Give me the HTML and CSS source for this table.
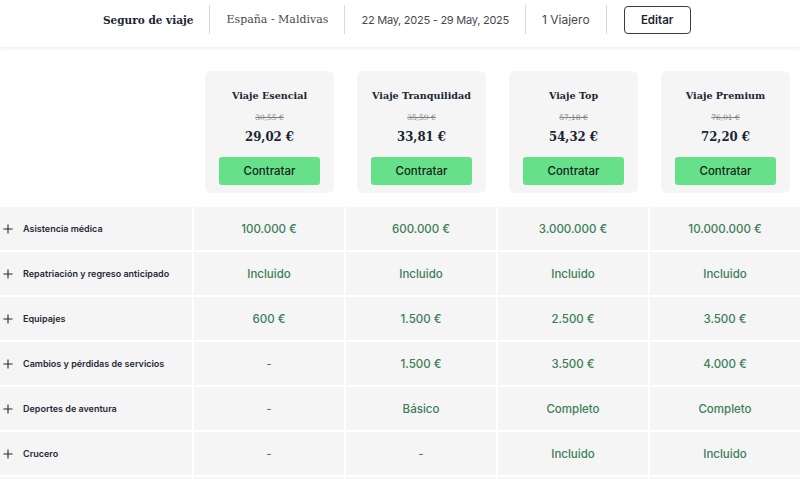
FILE: index.html
```html
<!DOCTYPE html>
<html lang="es">
<head>
<meta charset="utf-8">
<title>Seguro de viaje</title>
<link rel="stylesheet" href="styles.css">
</head>
<body>
<header class="topbar">
  <div class="tb-item tb-title">Seguro de viaje</div>
  <div class="tb-item tb-serif tb-sep">España - Maldivas</div>
  <div class="tb-item tb-sans tb-date tb-sep">22 May, 2025 - 29 May, 2025</div>
  <div class="tb-item tb-sans tb-sep">1 Viajero</div>
  <div class="tb-item tb-sep tb-btnwrap"><button class="edit-btn">Editar</button></div>
</header>

<main class="compare">
  <div class="head-empty"></div>
  <div class="plan-cell">
    <div class="card">
      <div class="card-title">Viaje Esencial</div>
      <div class="old-price">30,55 €</div>
      <div class="price">29,02 €</div>
      <button class="buy-btn">Contratar</button>
    </div>
  </div>
  <div class="plan-cell">
    <div class="card">
      <div class="card-title">Viaje Tranquilidad</div>
      <div class="old-price">35,59 €</div>
      <div class="price">33,81 €</div>
      <button class="buy-btn">Contratar</button>
    </div>
  </div>
  <div class="plan-cell">
    <div class="card">
      <div class="card-title">Viaje Top</div>
      <div class="old-price">57,18 €</div>
      <div class="price">54,32 €</div>
      <button class="buy-btn">Contratar</button>
    </div>
  </div>
  <div class="plan-cell">
    <div class="card">
      <div class="card-title">Viaje Premium</div>
      <div class="old-price">76,01 €</div>
      <div class="price">72,20 €</div>
      <button class="buy-btn">Contratar</button>
    </div>
  </div>

  <div class="label"><svg class="plus" viewBox="0 0 12 12"><path d="M6 0.5V11.5M0.5 6H11.5"/></svg><span>Asistencia médica</span></div>
  <div class="val">100.000 €</div><div class="val">600.000 €</div><div class="val">3.000.000 €</div><div class="val">10.000.000 €</div>

  <div class="label"><svg class="plus" viewBox="0 0 12 12"><path d="M6 0.5V11.5M0.5 6H11.5"/></svg><span>Repatriación y regreso anticipado</span></div>
  <div class="val">Incluido</div><div class="val">Incluido</div><div class="val">Incluido</div><div class="val">Incluido</div>

  <div class="label"><svg class="plus" viewBox="0 0 12 12"><path d="M6 0.5V11.5M0.5 6H11.5"/></svg><span>Equipajes</span></div>
  <div class="val">600 €</div><div class="val">1.500 €</div><div class="val">2.500 €</div><div class="val">3.500 €</div>

  <div class="label"><svg class="plus" viewBox="0 0 12 12"><path d="M6 0.5V11.5M0.5 6H11.5"/></svg><span>Cambios y pérdidas de servicios</span></div>
  <div class="val dash">-</div><div class="val">1.500 €</div><div class="val">3.500 €</div><div class="val">4.000 €</div>

  <div class="label"><svg class="plus" viewBox="0 0 12 12"><path d="M6 0.5V11.5M0.5 6H11.5"/></svg><span>Deportes de aventura</span></div>
  <div class="val dash">-</div><div class="val">Básico</div><div class="val">Completo</div><div class="val">Completo</div>

  <div class="label"><svg class="plus" viewBox="0 0 12 12"><path d="M6 0.5V11.5M0.5 6H11.5"/></svg><span>Crucero</span></div>
  <div class="val dash">-</div><div class="val dash">-</div><div class="val">Incluido</div><div class="val">Incluido</div>

  <div class="label"></div>
  <div class="val"></div><div class="val"></div><div class="val"></div><div class="val"></div>
</main>
</body>
</html>
```

FILE: styles.css
```css
* { box-sizing: border-box; }
html, body { margin: 0; padding: 0; }
body {
  background: #ffffff;
  font-family: "Inter", "Liberation Sans", sans-serif;
  color: #1c2631;
  overflow: hidden;
  height: 479px;
}

.topbar {
  height: 47px;
  display: flex;
  justify-content: flex-start;
  align-items: flex-start;
  padding-top: 5px;
  padding-left: 87px;
  background: #fff;
  box-shadow: 0 2px 3px rgba(0,0,0,0.06);
  position: relative;
  z-index: 1;
}
.tb-item {
  height: 29px;
  display: flex;
  align-items: center;
  padding: 0 16px;
  font-size: 12.5px;
  color: #3c4147;
  white-space: nowrap;
}
.tb-sep { border-left: 1px solid #d9d9d9; }
.tb-title {
  font-family: "DejaVu Serif", "Liberation Serif", serif;
  font-weight: 700;
  font-size: 10.5px;
  color: #1a2633;
}
.tb-serif {
  font-family: "DejaVu Serif", "Liberation Serif", serif;
  font-size: 11px;
  color: #454a50;
}
.tb-sans { font-size: 12px; color: #45494e; }
.tb-date { font-size: 11px; letter-spacing: -0.25px; }
.tb-btnwrap { padding-left: 17px; padding-right: 0; }
.edit-btn {
  width: 67px;
  height: 28px;
  background: #fff;
  border: 1px solid #3a3f45;
  border-radius: 4px;
  font-family: "Inter", "Liberation Sans", sans-serif;
  font-weight: 600;
  font-size: 11.5px;
  color: #1c2631;
}

.compare {
  display: grid;
  grid-template-columns: 192px repeat(4, 150px);
  column-gap: 2px;
  row-gap: 2px;
  grid-auto-rows: 43px;
  grid-template-rows: 158px;
}
.plan-cell {
  padding: 24px 10px 12px 11px;
}
.card {
  height: 122px;
  background: #f5f5f6;
  border-radius: 6px;
  display: flex;
  flex-direction: column;
  align-items: center;
  padding-top: 18px;
}
.card-title {
  font-family: "DejaVu Serif", "Liberation Serif", serif;
  font-weight: 700;
  font-size: 9.6px;
  line-height: 14px;
  color: #1a2633;
}
.old-price {
  margin-top: 10px;
  font-family: "DejaVu Serif", "Liberation Serif", serif;
  font-size: 7.5px;
  line-height: 10px;
  color: #7d8085;
  text-decoration: line-through;
}
.price {
  margin-top: 5px;
  font-family: "DejaVu Serif", "Liberation Serif", serif;
  font-stretch: condensed;
  font-weight: 700;
  font-size: 13px;
  line-height: 18px;
  color: #1a2633;
}
.buy-btn {
  margin-top: 11px;
  width: 101px;
  height: 28px;
  border: none;
  border-radius: 3px;
  background: #67e08a;
  font-family: "Inter", "Liberation Sans", sans-serif;
  font-size: 11.5px;
  font-weight: 500;
  color: #16241c;
}

.label {
  background: #f5f5f5;
  display: flex;
  align-items: center;
  padding-left: 3px;
  font-size: 9px;
  font-weight: 600;
  color: #1f2a37;
}
.plus {
  width: 10px;
  height: 10px;
  margin-right: 10px;
  fill: none;
  stroke: #1f2a37;
  stroke-width: 1.3;
}
.val {
  background: #f5f5f5;
  display: flex;
  align-items: center;
  justify-content: center;
  font-size: 11.5px;
  font-weight: 500;
  color: #3a7d58;
}
.val.dash { color: #6c7075; }
```
